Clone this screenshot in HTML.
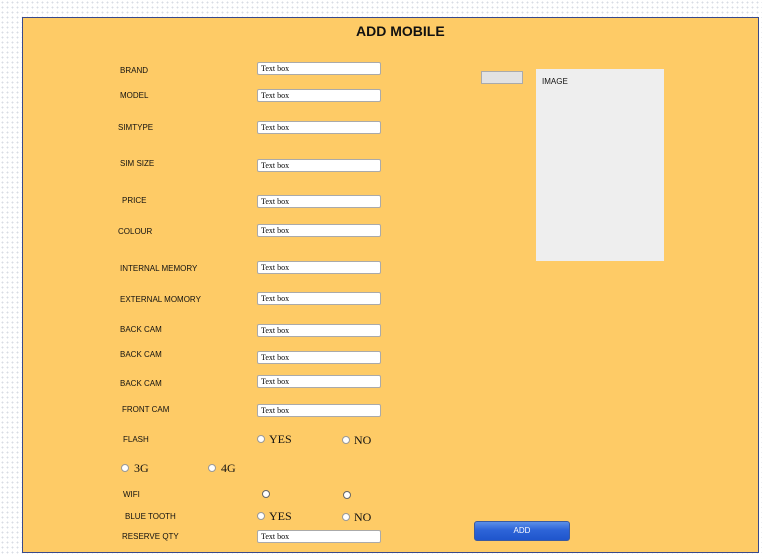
<!DOCTYPE html><html><head><style>
body{margin:0;width:762px;height:554px;overflow:hidden;background-color:#fff;background-image:radial-gradient(#d8dce4 0.8px,transparent 0.9px);background-size:5px 5px;font-family:"Liberation Sans",sans-serif;position:relative}
#p{position:absolute;left:22px;top:17px;width:735px;height:534px;background:#FECB66;border:1px solid #3a4a8a}
.a{position:absolute}
.l{position:absolute;font-size:8px;color:#111;line-height:10px;margin-top:1px}
.t{position:absolute;left:257px;width:119px;height:11px;background:#fff;border:1px solid #aaa;border-radius:2px;font-family:"Liberation Serif",serif;font-size:8px;line-height:11px;padding-left:3px;box-sizing:content-box}
.r{position:absolute;width:6px;height:6px;border-radius:50%;background:#fff;border:1px solid #999}
.s{position:absolute;font-family:"Liberation Serif",serif;font-size:12px;color:#111;line-height:12px}
</style></head><body>
<div id="p"></div>
<div class="a" style="left:356px;top:23px;font-size:14px;font-weight:bold;color:#111">ADD MOBILE</div>
<div class="l" style="left:120px;top:65px">BRAND</div><div class="t" style="top:62px">Text box</div>
<div class="l" style="left:120px;top:90px">MODEL</div><div class="t" style="top:89px">Text box</div>
<div class="l" style="left:118px;top:122px">SIMTYPE</div><div class="t" style="top:121px">Text box</div>
<div class="l" style="left:120px;top:158px">SIM SIZE</div><div class="t" style="top:159px">Text box</div>
<div class="l" style="left:122px;top:195px">PRICE</div><div class="t" style="top:195px">Text box</div>
<div class="l" style="left:118px;top:226px">COLOUR</div><div class="t" style="top:224px">Text box</div>
<div class="l" style="left:120px;top:263px">INTERNAL MEMORY</div><div class="t" style="top:261px">Text box</div>
<div class="l" style="left:120px;top:294px">EXTERNAL MOMORY</div><div class="t" style="top:292px">Text box</div>
<div class="l" style="left:120px;top:324px">BACK CAM</div><div class="t" style="top:324px">Text box</div>
<div class="l" style="left:120px;top:349px">BACK CAM</div><div class="t" style="top:351px">Text box</div>
<div class="l" style="left:120px;top:378px">BACK CAM</div><div class="t" style="top:375px">Text box</div>
<div class="l" style="left:122px;top:404px">FRONT CAM</div><div class="t" style="top:404px">Text box</div>
<div class="l" style="left:123px;top:434px">FLASH</div>
<div class="r" style="left:257px;top:435px"></div><div class="s" style="left:269px;top:433px">YES</div>
<div class="r" style="left:342px;top:436px"></div><div class="s" style="left:354px;top:434px">NO</div>
<div class="r" style="left:121px;top:464px"></div><div class="s" style="left:134px;top:462px">3G</div>
<div class="r" style="left:208px;top:464px"></div><div class="s" style="left:221px;top:462px">4G</div>
<div class="l" style="left:123px;top:489px">WIFI</div>
<div class="r" style="left:262px;top:490px;border-color:#666"></div><div class="r" style="left:343px;top:491px;border-color:#666"></div>
<div class="l" style="left:125px;top:511px">BLUE TOOTH</div>
<div class="r" style="left:257px;top:512px"></div><div class="s" style="left:269px;top:510px">YES</div>
<div class="r" style="left:342px;top:513px"></div><div class="s" style="left:354px;top:511px">NO</div>
<div class="l" style="left:122px;top:531px">RESERVE QTY</div><div class="t" style="top:530px">Text box</div>
<div class="a" style="left:481px;top:71px;width:40px;height:11px;background:#e2e2e2;border:1px solid #aaa"></div>
<div class="a" style="left:536px;top:69px;width:128px;height:192px;background:#eee"></div>
<div class="l" style="left:542px;top:76px">IMAGE</div>
<div class="a" style="left:474px;top:521px;width:94px;height:18px;border-radius:3px;background:linear-gradient(#5b8fe8,#2d64d8 45%,#1f55cc);border:1px solid #3a5aa0;color:#fff;font-size:8px;text-align:center;line-height:18px">ADD</div>
</body></html>
